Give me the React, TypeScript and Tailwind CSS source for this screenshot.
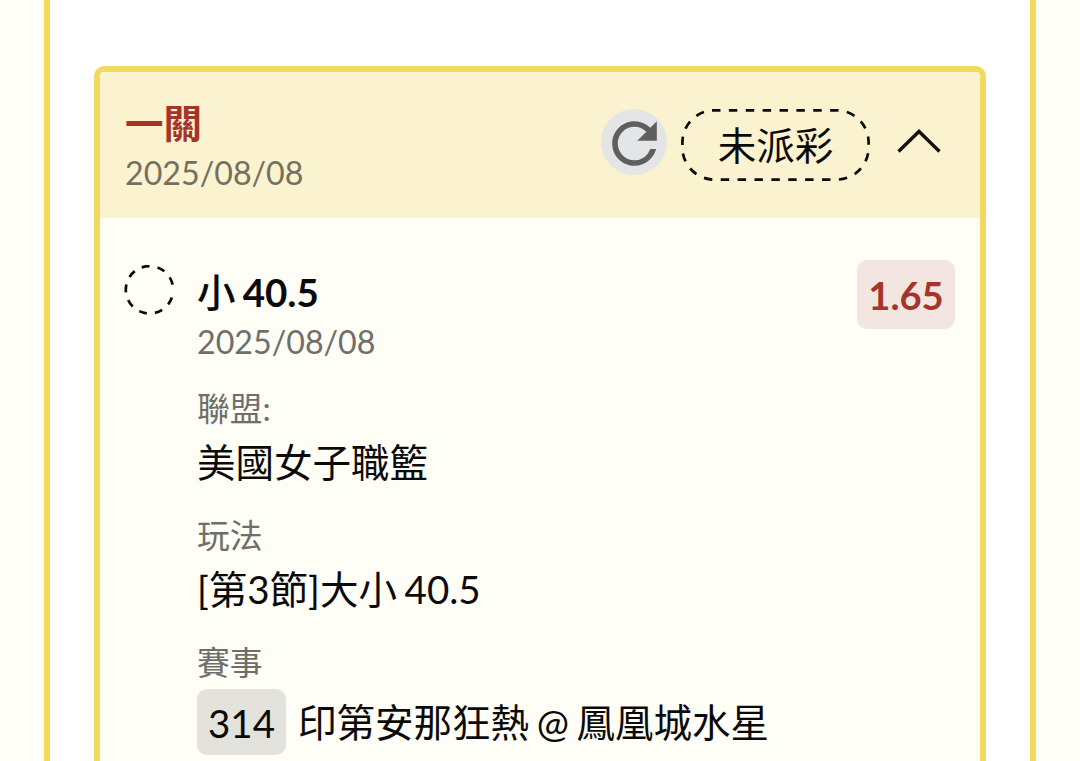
import { MdRefresh } from "react-icons/md";

interface DetailProps {
  label: string;
  children: React.ReactNode;
}

function Detail({ label, children }: DetailProps) {
  return (
    <div className="mt-[17px]">
      <p className="h-[49px] text-[32.8px] leading-[52px] text-[#6e6e6a]">
        {label}
      </p>
      <div className="flex min-h-[61px] items-center whitespace-pre text-[38.5px] leading-[61px] text-[#0a0a0a] [word-spacing:-2.2px]">
        {children}
      </div>
    </div>
  );
}

function PendingCircle() {
  return (
    <svg viewBox="0 0 50 50" className="mt-[5px] h-[50px] w-[50px]" fill="none">
      <path
        d="M47.9 32.5A23.7 23.7 0 1 1 49.2 25"
        stroke="#0a0a0a"
        strokeWidth="2.7"
        strokeDasharray="7.9 8.05"
      />
    </svg>
  );
}

function StatusPill({ text }: { text: string }) {
  return (
    <div className="relative flex h-[72px] w-[189px] items-center justify-center">
      <svg viewBox="0 0 189 72" className="absolute inset-0" fill="none">
        <path
          d="M31 1.4H155.6A32 32 0 0 1 187.6 33.4V38.6A32 32 0 0 1 155.6 70.6H33.4A32 32 0 0 1 1.4 38.6V33.4A32 32 0 0 1 31 1.4Z"
          stroke="#0a0a0a"
          strokeWidth="2.7"
          strokeDasharray="8.44 8.44"
        />
      </svg>
      <span className="text-[38.5px] leading-none text-[#0a0a0a]">{text}</span>
    </div>
  );
}

export default function App() {
  return (
    <div
      lang="zh-Hant"
      className="h-[761px] overflow-hidden bg-[#fefdf6] pl-[44px] pr-[44px] font-['Lato','Noto_Sans_CJK_TC',sans-serif]"
    >
      <main className="h-full border-x-[6px] border-[#f3da5c] bg-white px-[44px] pt-[66px]">
        <section className="h-[760px] overflow-hidden rounded-[10px] border-[6px] border-[#f1da5d] bg-[#fefdf6]">
          <header className="flex h-[146px] bg-[#fbf2cf] pl-[25px]">
            <div className="w-[476px] pt-[24px]">
              <h1 className="h-[54px] text-[38.5px] font-bold leading-[54px] text-[#a6342a]">
                一關
              </h1>
              <p className="h-[46px] text-[32.2px] leading-[46px] text-[#74705f]">
                2025/08/08
              </p>
            </div>
            <div className="mt-[37px] flex h-[66px] w-[66px] items-center justify-center rounded-full bg-[#e4e5e7]">
              <MdRefresh className="mt-[2px] h-[67px] w-[67px] shrink-0 text-[#5f5f5f]" />
            </div>
            <div className="ml-[14px] mt-[37px]">
              <StatusPill text="未派彩" />
            </div>
            <svg viewBox="0 0 46 28" className="ml-[26px] mt-[55px] h-[28px] w-[46px]" fill="none">
              <path d="M2.5 24.5L23 4.5L43.5 24.5" stroke="#15130c" strokeWidth="3.4" />
            </svg>
          </header>

          <div className="flex pl-[24px] pr-[25px] pt-[42px]">
            <PendingCircle />
            <div className="ml-[23px] flex-1">
              <h2 className="h-[60px] text-[38.5px] font-bold leading-[64px] text-[#0a0a0a] [word-spacing:-2.2px]">
                <span className="font-medium">小</span> 40.5
              </h2>
              <p className="h-[46px] text-[32.2px] leading-[44px] text-[#6e6e6a]">
                2025/08/08
              </p>
              <Detail label="聯盟:">美國女子職籃</Detail>
              <Detail label="玩法">[第3節]大小 40.5</Detail>
              <Detail label="賽事">
                <span className="mr-[12px] mt-[3px] flex h-[66px] w-[89px] shrink-0 items-center justify-center rounded-[10px] bg-[#e3e2dc] pt-[2px]">
                  314
                </span>
                <span className="pt-[3px]">印第安那狂熱 @ 鳳凰城水星</span>
              </Detail>
            </div>
            <div className="flex h-[69px] w-[98px] shrink-0 items-center justify-center rounded-[10px] bg-[#f3e6e0] pt-[2px] text-[38.2px] font-bold text-[#a6342a]">
              1.65
            </div>
          </div>
        </section>
      </main>
    </div>
  );
}
